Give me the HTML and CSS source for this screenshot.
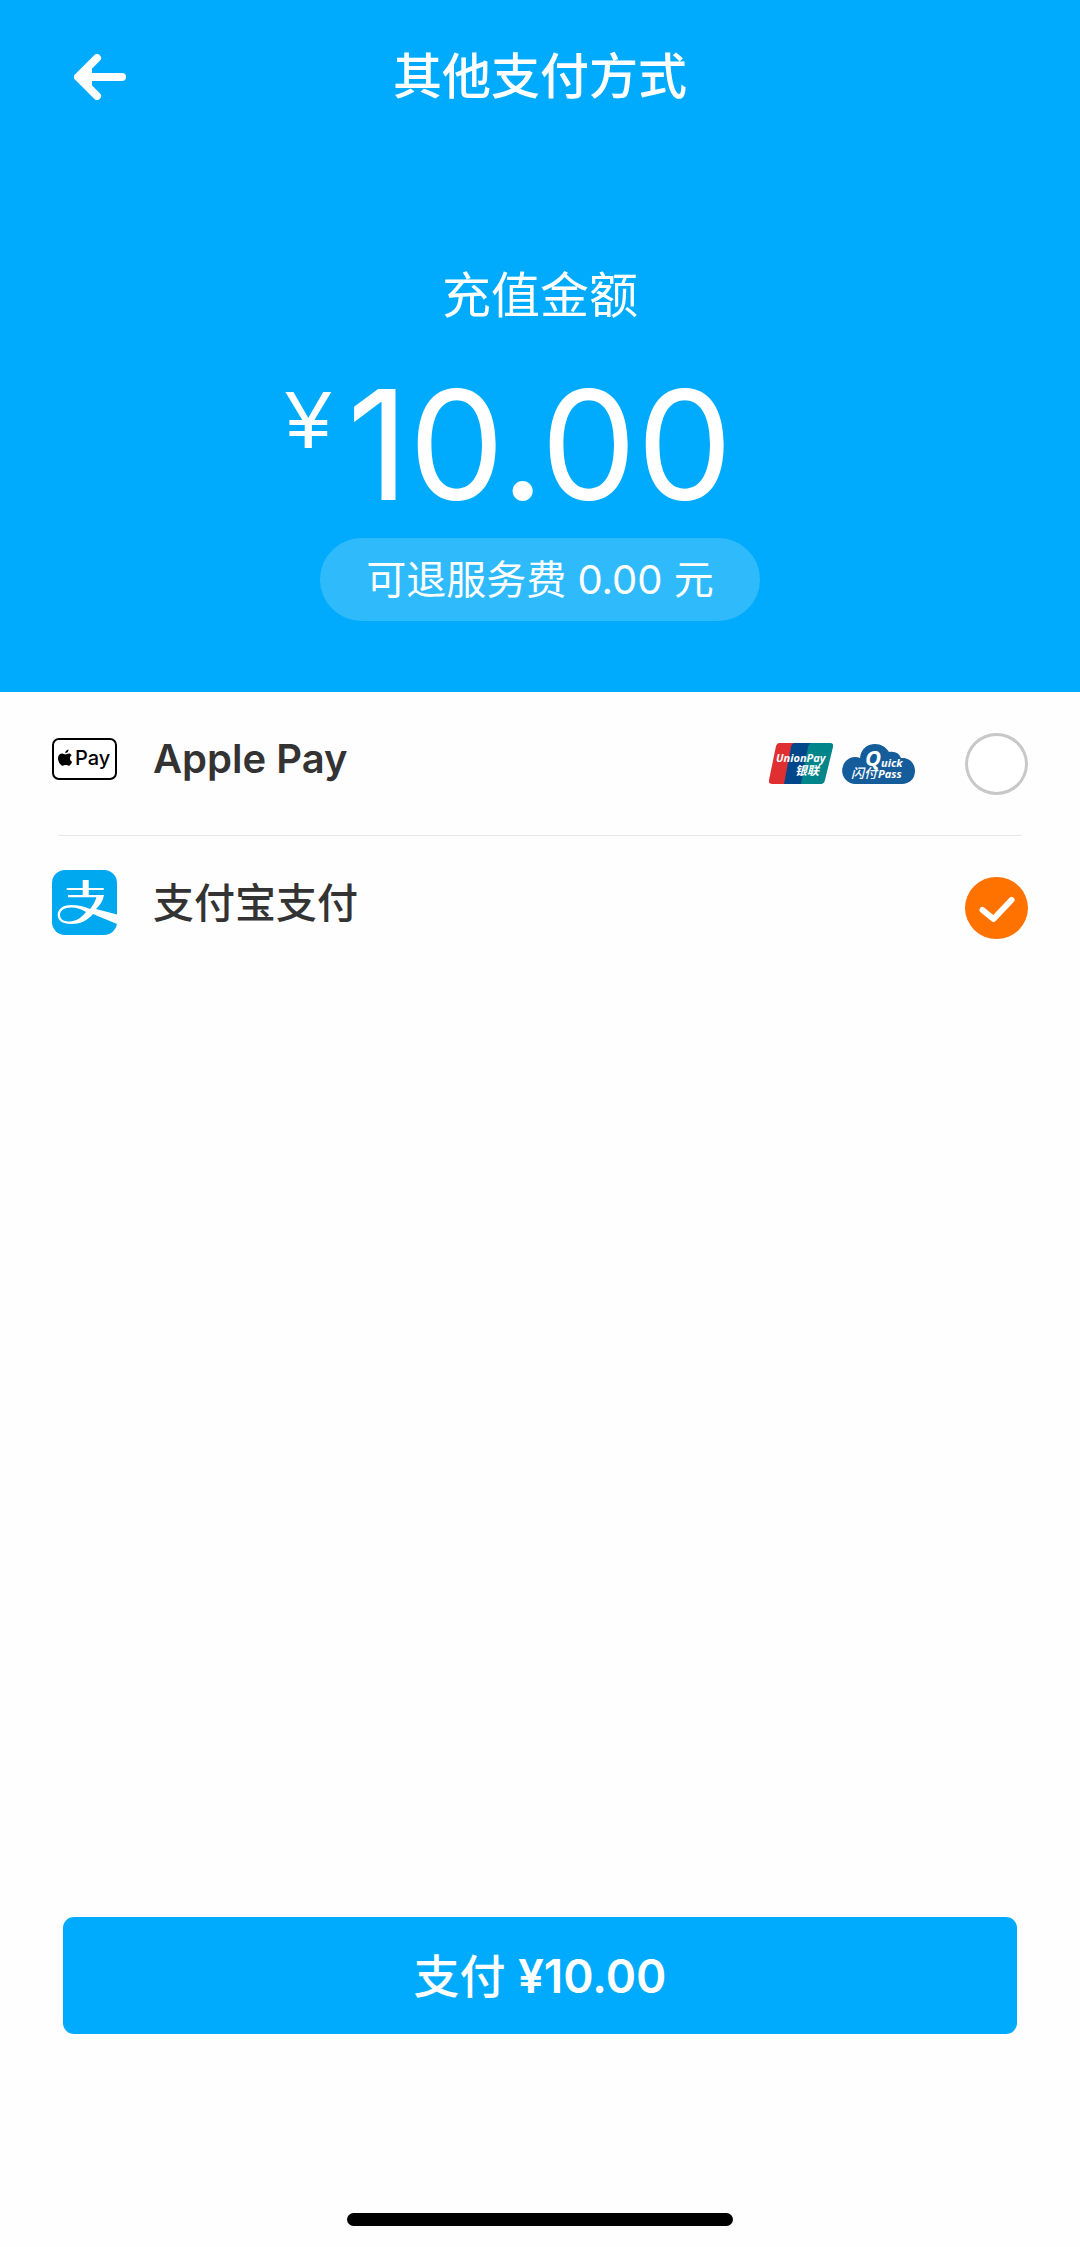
FILE: index.html
```html
<!DOCTYPE html>
<html lang="zh-CN">
<head>
<meta charset="utf-8">
<meta name="viewport" content="width=device-width, initial-scale=1">
<title>其他支付方式</title>
<link rel="stylesheet" href="styles.css">
</head>
<body>
<form class="page">
  <header class="hero">
    <nav class="nav">
      <button class="back" type="button" aria-label="返回">
        <svg class="back-icon" viewBox="0 0 52 46" aria-hidden="true">
          <path d="M23 4 4 23l19 19M6 23h42" fill="none" stroke="#fff" stroke-width="8" stroke-linecap="round" stroke-linejoin="round"/>
          <path d="M4 23 12 13h6v20h-6z" fill="#fff"/>
        </svg>
      </button>
      <h1 class="title">其他支付方式</h1>
    </nav>
    <p class="caption">充值金额</p>
    <p class="amount"><span class="currency">¥</span><span class="value">10.00</span></p>
    <p class="fee">可退服务费 0.00 元</p>
  </header>

  <main class="methods">
    <label class="method">
      <span class="brand">
        <svg class="brand-icon" viewBox="0 0 66 66" aria-hidden="true">
          <rect x="1" y="13" width="63" height="40" rx="6" fill="#fff" stroke="#000" stroke-width="2"/>
          <path d="M13.200 27.200c.1-2 1.500-3.400 3.300-3.700.2 2-1.400 3.700-3.300 3.700zM19.600 29.400c-1.200.8-1.800 1.800-1.700 3.100.1 1.500.9 2.600 2.200 3.200-.7 2-2 4-3.400 4-1.200 0-1.700-.7-3-.7s-1.900.7-3 .7c-2.200 0-4.700-4.100-4.700-7.400 0-3 1.900-4.800 4.100-4.800 1.400 0 2.500.9 3.300.9.900 0 2-.9 3.600-.9 1.100 0 2 .6 2.600 1.900z" fill="#000"/>
          <text class="applepay-text" x="23" y="39">Pay</text>
        </svg>
        <span class="name name-latin">Apple Pay</span>
      </span>
      <svg class="unionpay" viewBox="0 0 64 41" aria-hidden="true">
        <path d="M10 0h18L18 41H3Q-1 41 0 37L7 3Q8 0 10 0z" fill="#e02f30"/>
        <path d="M26 0h18L33 41H15L22 4Q23 0 26 0z" fill="#00468a"/>
        <path d="M43 0h18q4 0 3 4l-8 33q-1 4-4 4H32L39 4Q40 0 43 0z" fill="#00858a"/>
        <text class="union-text" x="7" y="19">UnionPay</text>
        <text class="union-cn" x="26" y="32">银联</text>
      </svg>
      <svg class="quickpass" viewBox="0 0 72 40" aria-hidden="true">
        <path d="M13 40a13 13.500 0 1 1 4-26C18 5 24 0 32 0c6 0 11 3 14 8 6-1 10 1 12 6 8-1 14 5 14 13s-6 13-13 13z" fill="#155c9a"/>
        <text class="quick-q" x="22" y="22">Q</text>
        <text class="quick-text" x="38" y="23">uick</text>
        <text class="quick-cn" x="8" y="34">闪付</text>
        <text class="quick-text" x="35" y="34">Pass</text>
      </svg>
      <span class="choice">
        <input class="radio" type="radio" name="method" value="applepay">
        <svg class="tick" viewBox="0 0 62 62" aria-hidden="true"><path d="M17 33 28 42 46 23" fill="none" stroke="#fff" stroke-width="6" stroke-linecap="round" stroke-linejoin="round"/></svg>
      </span>
    </label>
    <hr class="divider">
    <label class="method">
      <span class="brand">
        <svg class="brand-icon" viewBox="0 0 66 66" aria-hidden="true">
          <rect width="65" height="65" rx="13" fill="#00a8ef"/>
          <path d="M30.700 10h6v8h15v2h-15v5H52c-1 6-4 10-8 14l21 5.500V54L41 44C35 51 28 54 19 54 10 54 5.700 50 5.700 45 5.700 39 11 35 19 35c7 0 13 1.500 19 4 3-3.500 5-7 6.500-11.700H16V25h14.700v-5h-16v-2h16zM34 42c-5-3-9-4.500-15-4.500-7 0-11 3-11 7.500s4 6.500 9.500 6.500C24 51.500 29 48 34 42z" fill="#fff" fill-rule="evenodd"/>
        </svg>
        <span class="name">支付宝支付</span>
      </span>
      <span class="choice">
        <input class="radio" type="radio" name="method" value="alipay" checked>
        <svg class="tick" viewBox="0 0 62 62" aria-hidden="true"><path d="M17 33 28 42 46 23" fill="none" stroke="#fff" stroke-width="6" stroke-linecap="round" stroke-linejoin="round"/></svg>
      </span>
    </label>
  </main>

  <footer class="footer">
    <button class="pay" type="button">支付 <span class="pay-sum">¥10.00</span></button>
    <div class="home-bar"></div>
  </footer>
</form>
</body>
</html>
```
FILE: styles.css
```css
* {
  box-sizing: border-box;
}

body {
  margin: 0;
  background: #fefefe;
  color: #333;
  font-family: Inter, "Noto Sans CJK SC", sans-serif;
}

.page {
  display: flex;
  flex-direction: column;
  min-height: 100vh;
}

.hero {
  display: flex;
  flex-direction: column;
  align-items: center;
  padding-bottom: 71px;
  background: #00abfd;
  color: #fff;
}

.nav {
  display: grid;
  grid-template-columns: 1fr auto 1fr;
  align-items: center;
  align-self: stretch;
  height: 154px;
  padding: 0 74px;
}

.back {
  justify-self: start;
  display: flex;
  padding: 0;
  border: 0;
  background: none;
}

.back-icon {
  width: 52px;
  height: 46px;
}

.title {
  margin: 0;
  font-size: 49px;
  font-weight: 500;
  line-height: 60px;
}

.caption {
  margin: 112px 0 0;
  font-size: 49px;
  line-height: 60px;
}

.amount {
  display: flex;
  align-items: flex-start;
  gap: 16px;
  margin: 44px 0 18px;
  padding-right: 62px;
}

.currency {
  font-family: "Liberation Sans", sans-serif;
  font-size: 82px;
  line-height: 100px;
}

.value {
  font-size: 152px;
  line-height: 150px;
}

.fee {
  margin: 0;
  padding: 0 46px;
  border-radius: 42px;
  background: #2fbafc;
  font-size: 40px;
  line-height: 83px;
}

.methods {
  flex: 1;
}

.method {
  display: flex;
  align-items: center;
  height: 143px;
  padding: 0 52px;
}

.brand {
  display: flex;
  flex: 1;
  align-items: center;
  gap: 35px;
  padding-bottom: 10px;
}

.brand-icon {
  width: 66px;
  height: 66px;
}

.name {
  font-size: 41px;
  font-weight: 500;
  line-height: 60px;
}

.name-latin {
  font-size: 40px;
  font-weight: 600;
}

.divider {
  height: 1px;
  margin: 0 58px;
  border: 0;
  background: #e8e8e8;
}

.unionpay {
  width: 64px;
  height: 41px;
  margin-right: 10px;
}

.quickpass {
  width: 72px;
  height: 40px;
  margin-right: 50px;
  overflow: visible;
}

.applepay-text {
  font-size: 20px;
  font-weight: 500;
}

.union-text,
.union-cn,
.quick-q,
.quick-text,
.quick-cn {
  fill: #fff;
  font-family: "Open Sans", "Noto Sans CJK SC", sans-serif;
  font-style: italic;
  font-weight: 700;
}

.union-text {
  font-size: 11px;
}

.union-cn {
  font-size: 12px;
}

.quick-q {
  font-size: 22px;
}

.quick-text {
  font-size: 11px;
}

.quick-cn {
  font-size: 13px;
  font-weight: 500;
}

.choice {
  display: grid;
}

.radio,
.tick {
  grid-area: 1 / 1;
  width: 63px;
  height: 62px;
}

.radio {
  margin: 0;
  appearance: none;
  border: 3px solid #c8c8c8;
  border-radius: 50%;
  background: #fff;
}

.radio:checked {
  border-color: #ff7200;
  background: #ff7200;
}

.tick {
  visibility: hidden;
  pointer-events: none;
}

.radio:checked + .tick {
  visibility: visible;
}

.footer {
  display: flex;
  flex-direction: column;
  align-items: center;
  padding: 0 63px 21px;
}

.pay {
  align-self: stretch;
  height: 117px;
  margin-bottom: 179px;
  padding: 0 0 6px;
  border: 0;
  border-radius: 11px;
  background: #00abfd;
  color: #fff;
  font-family: inherit;
  font-size: 46px;
  font-weight: 500;
}

.pay-sum {
  font-weight: 600;
}

.home-bar {
  width: 386px;
  height: 13px;
  border-radius: 7px;
  background: #000;
}
```
